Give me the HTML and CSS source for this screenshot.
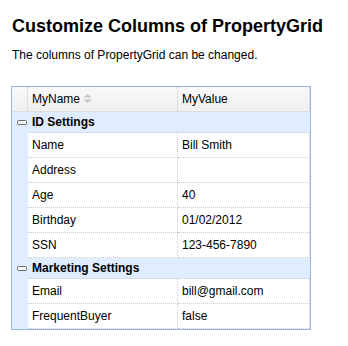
FILE: index.html
```html
<!DOCTYPE html>
<html>
<head>
<meta charset="utf-8">
<link rel="stylesheet" href="styles.css">
</head>
<body>
<h2 class="title">Customize Columns of PropertyGrid</h2>
<p class="desc">The columns of PropertyGrid can be changed.</p>
<div class="pg">
  <div class="hdr">
    <div class="gut"></div>
    <div class="c1 hcell">MyName
      <svg class="sort" width="9" height="9" viewBox="0 0 9 9"><path d="M4.5 0 L8.5 3.5 L0.5 3.5 Z M0.5 5.5 L8.5 5.5 L4.5 9 Z" fill="#c4c4c4"/></svg>
    </div>
    <div class="c2 hcell">MyValue</div>
  </div>

  <div class="grp">
    <div class="gut"><svg class="exp" width="10" height="5" viewBox="0 0 10 5"><rect x="0.5" y="0.5" width="9" height="4" rx="1" fill="#f4f4f4" stroke="#6d6d6d"/></svg></div>
    <div class="gname">ID Settings</div>
  </div>
  <div class="row"><div class="gut"></div><div class="c1">Name</div><div class="c2">Bill Smith</div></div>
  <div class="row"><div class="gut"></div><div class="c1">Address</div><div class="c2"></div></div>
  <div class="row"><div class="gut"></div><div class="c1">Age</div><div class="c2">40</div></div>
  <div class="row"><div class="gut"></div><div class="c1">Birthday</div><div class="c2">01/02/2012</div></div>
  <div class="row"><div class="gut"></div><div class="c1">SSN</div><div class="c2">123-456-7890</div></div>

  <div class="grp">
    <div class="gut"><svg class="exp" width="10" height="5" viewBox="0 0 10 5"><rect x="0.5" y="0.5" width="9" height="4" rx="1" fill="#f4f4f4" stroke="#6d6d6d"/></svg></div>
    <div class="gname">Marketing Settings</div>
  </div>
  <div class="row"><div class="gut"></div><div class="c1">Email</div><div class="c2">bill@gmail.com</div></div>
  <div class="row"><div class="gut"></div><div class="c1">FrequentBuyer</div><div class="c2">false</div></div>
</div>
</body>
</html>
```

FILE: styles.css
```css
html, body {
  margin: 0;
  padding: 0;
  background: #fff;
}
body {
  padding: 15px 11px 0 11px;
  font-family: "Liberation Sans", Arial, Helvetica, sans-serif;
  color: #000;
}
.title {
  margin: 0;
  font-size: 18px;
  line-height: 22px;
  font-weight: bold;
  padding-left: 1px;
}
.desc {
  margin: 10px 0 0 0;
  font-size: 12px;
  line-height: 16px;
  padding-left: 1px;
}
.pg {
  margin-top: 23px;
  width: 300px;
  box-sizing: border-box;
  border: 1px solid #95B8E7;
  font-size: 12px;
}
.hdr {
  display: flex;
  height: 25px;
  box-sizing: border-box;
  border-bottom: 1px solid #dddddd;
  background: linear-gradient(to bottom, #F9F9F9 0, #EFEFEF 100%);
  line-height: 24px;
}
.hdr .gut {
  width: 16px;
  box-sizing: border-box;
  border-right: 1px dotted #ccc;
}
.hcell {
  display: flex;
  align-items: center;
}
.sort {
  margin-left: 3px;
  margin-top: -1px;
}
.c1 {
  width: 150px;
  box-sizing: border-box;
  padding-left: 4px;
  border-right: 1px dotted #ccc;
  white-space: nowrap;
}
.c2 {
  width: 132px;
  box-sizing: border-box;
  padding-left: 4px;
  border-right: 1px dotted #ccc;
  white-space: nowrap;
}
.grp {
  display: flex;
  height: 21px;
  background: #E0ECFF;
  line-height: 20px;
  font-weight: bold;
}
.grp .gut {
  width: 16px;
  display: flex;
  align-items: center;
  justify-content: center;
  padding-left: 3px;
  box-sizing: border-box;
}
.exp {
  display: block;
  margin-top: 0;
}
.gname {
  flex: 1;
  padding-left: 4px;
  border-bottom: 1px solid #d6dde8;
}
.row {
  display: flex;
  height: 25px;
  line-height: 24px;
}
.row .gut {
  width: 16px;
  background: #E0ECFF;
}
.row .c1, .row .c2 {
  background: #fff;
  border-bottom: 1px dotted #ccc;
}
```
